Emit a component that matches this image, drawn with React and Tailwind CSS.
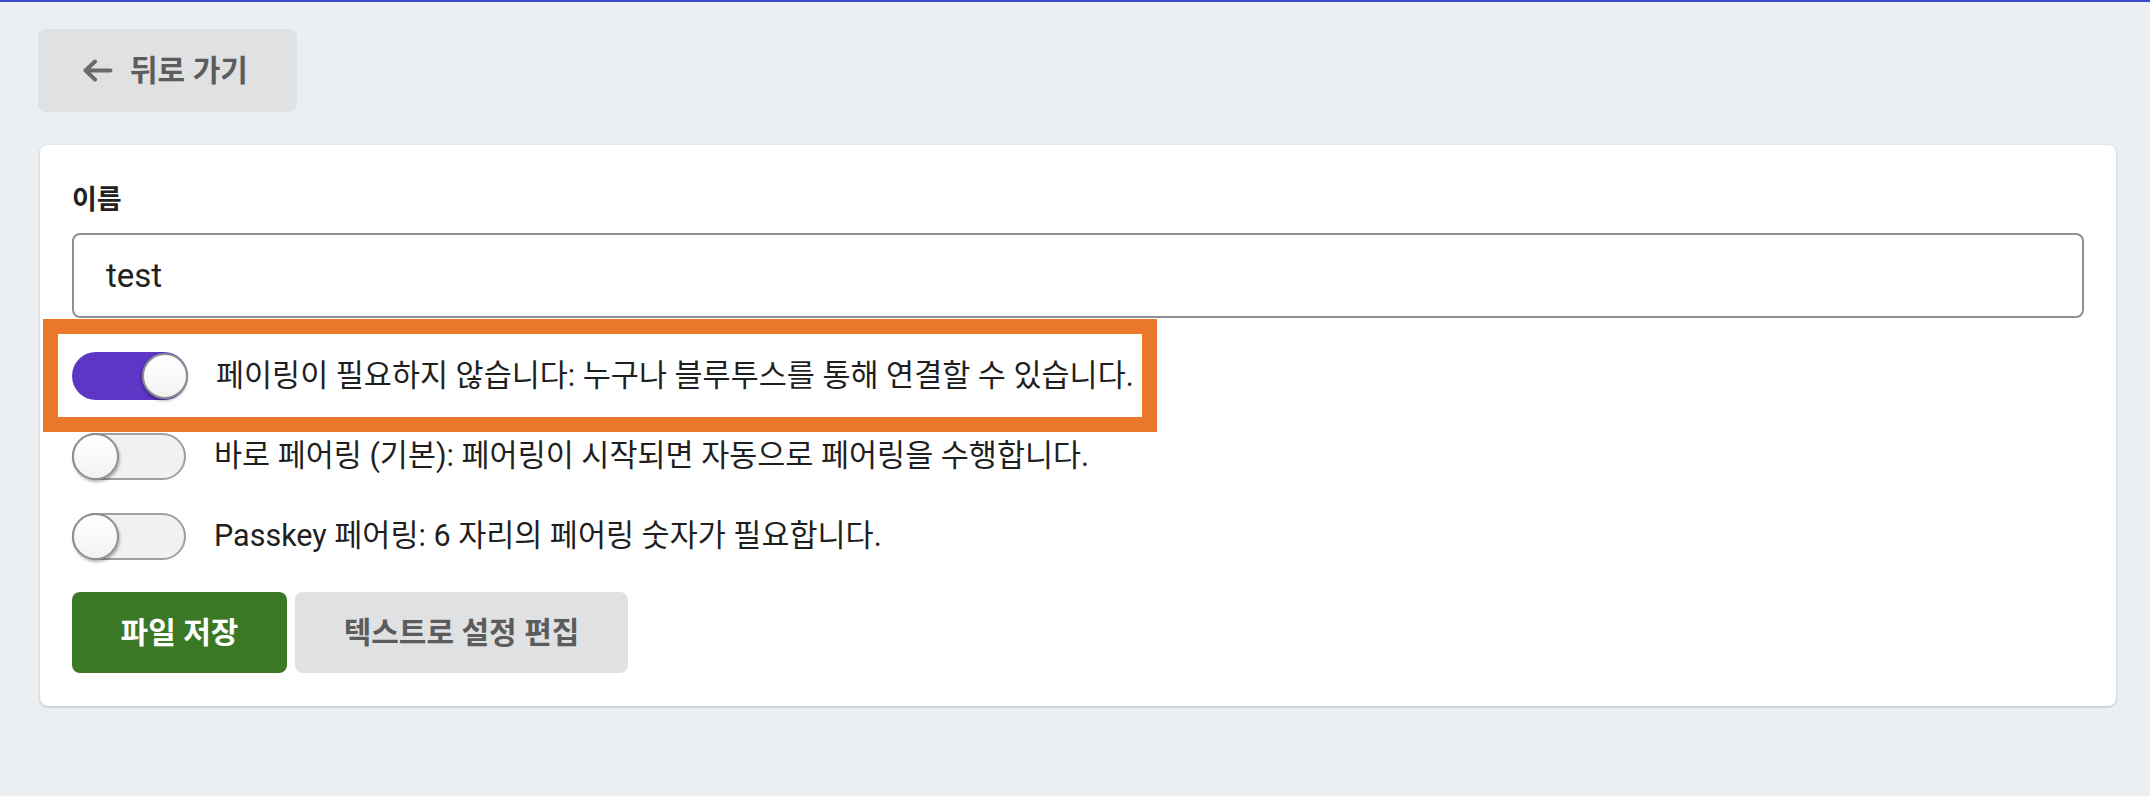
const font = { fontFamily: 'Roboto, "Noto Sans CJK KR", sans-serif' };

const options = [
  { on: true, label: '페이링이 필요하지 않습니다: 누구나 블루투스를 통해 연결할 수 있습니다.' },
  { on: false, label: '바로 페어링 (기본): 페어링이 시작되면 자동으로 페어링을 수행합니다.' },
  { on: false, label: 'Passkey 페어링: 6 자리의 페어링 숫자가 필요합니다.' },
];

function BackArrow() {
  return (
    <svg width="30" height="23" viewBox="0 0 30 23" fill="none" stroke="#6b6b6b" strokeWidth="4" strokeLinecap="round" strokeLinejoin="round">
      <path d="M12 2.5 L2.5 11.5 L12 20.5 M2.5 11.5 H27.5" />
    </svg>
  );
}

function Toggle({ on }) {
  return (
    <div
      className={
        on
          ? 'relative w-[116px] h-[48px] rounded-full bg-[#5d36c5] shrink-0'
          : 'relative w-[114px] h-[47px] rounded-full bg-[#f1f1f1] border-2 border-[#a0a0a0] shrink-0'
      }
    >
      <div
        className={
          on
            ? 'absolute right-0 top-[1px] w-[46px] h-[46px] rounded-full bg-gradient-to-b from-white to-[#f2f2f2] border-2 border-[#8f8f8f] shadow-[-1px_2px_3px_rgba(0,0,0,0.3)]'
            : 'absolute left-[-2px] top-[-2px] w-[47px] h-[47px] rounded-full bg-gradient-to-b from-white to-[#f2f2f2] border-2 border-[#8f8f8f] shadow-[1px_2px_3px_rgba(0,0,0,0.3)]'
        }
      />
    </div>
  );
}

export default function App() {
  return (
    <div style={font} className="min-h-screen bg-[#eceff1] border-t-2 border-[#3b4cca] pt-[27px] pl-[38px] pr-[34px]">
      <button className="flex items-center gap-[17px] h-[83px] w-[259px] pl-[45px] rounded-[8px] bg-[#e0e1e3] text-[#5c5c5c] text-[30px] font-bold">
        <BackArrow />
        <span>뒤로 가기</span>
      </button>

      <div className="relative mt-[33px] ml-[2px] bg-white rounded-[8px] shadow-[0_1px_3px_rgba(0,0,0,0.22)] px-[32px] pt-[32px] pb-[33px]">
        <div className="text-[27px] leading-[46px] font-bold text-[#222]">이름</div>
        <input
          readOnly
          value="test"
          style={font}
          className="mt-[10px] w-full h-[85px] rounded-[8px] border-2 border-[#8e8e93] pl-[32px] text-[33px] text-[#222] outline-none"
        />

        <div className="mt-[18px]">
          {options.map((o) => (
            <div key={o.label} className="flex items-center h-[80px]">
              <Toggle on={o.on} />
              <span className="ml-[28px] text-[30.5px] text-[#1f1f1f]">{o.label}</span>
            </div>
          ))}
        </div>

        <div className="flex gap-[8px] mt-[16px]">
          <button className="w-[215px] h-[81px] rounded-[8px] bg-[#3b7826] text-white text-[30px] font-bold">파일 저장</button>
          <button className="w-[333px] h-[81px] rounded-[8px] bg-[#e0e1e3] text-[#5c5c5c] text-[30px] font-bold">텍스트로 설정 편집</button>
        </div>

        <div className="absolute left-[3px] top-[174px] w-[1114px] h-[113px] border-[15px] border-[#eb772b] pointer-events-none" />
      </div>
    </div>
  );
}
